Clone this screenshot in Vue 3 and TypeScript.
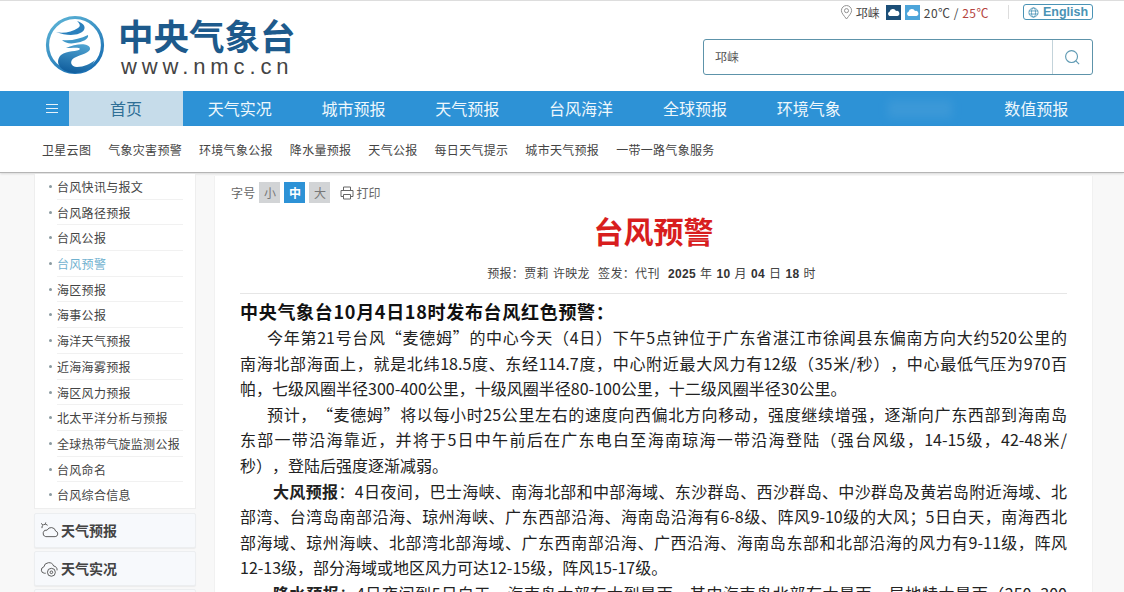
<script setup lang="ts">
const navItems: string[] = ["天气实况", "城市预报", "天气预报", "台风海洋", "全球预报", "环境气象", "", "数值预报"];
const subNav: string[] = ["卫星云图", "气象灾害预警", "环境气象公报", "降水量预报", "天气公报", "每日天气提示", "城市天气预报", "一带一路气象服务"];
const sideList: string[] = [
  "台风快讯与报文", "台风路径预报", "台风公报", "台风预警", "海区预报", "海事公报", "海洋天气预报",
  "近海海雾预报", "海区风力预报", "北太平洋分析与预报", "全球热带气旋监测公报", "台风命名", "台风综合信息",
];
const active = "台风预警";

interface Para {
  label?: string;
  lines: string[];
  open?: boolean; // last line runs past the fold, justify it too
}
const paras: Para[] = [
  {
    lines: [
      "今年第21号台风“麦德姆”的中心今天（4日）下午5点钟位于广东省湛江市徐闻县东偏南方向大约520公里的",
      "南海北部海面上，就是北纬18.5度、东经114.7度，中心附近最大风力有12级（35米/秒），中心最低气压为970百",
      "帕，七级风圈半径300-400公里，十级风圈半径80-100公里，十二级风圈半径30公里。",
    ],
  },
  {
    lines: [
      "预计，“麦德姆”将以每小时25公里左右的速度向西偏北方向移动，强度继续增强，逐渐向广东西部到海南岛",
      "东部一带沿海靠近，并将于5日中午前后在广东电白至海南琼海一带沿海登陆（强台风级，14-15级，42-48米/",
      "秒），登陆后强度逐渐减弱。",
    ],
  },
  {
    label: "大风预报",
    lines: [
      "：4日夜间，巴士海峡、南海北部和中部海域、东沙群岛、西沙群岛、中沙群岛及黄岩岛附近海域、北",
      "部湾、台湾岛南部沿海、琼州海峡、广东西部沿海、海南岛沿海有6-8级、阵风9-10级的大风；5日白天，南海西北",
      "部海域、琼州海峡、北部湾北部海域、广东西南部沿海、广西沿海、海南岛东部和北部沿海的风力有9-11级，阵风",
      "12-13级，部分海域或地区风力可达12-15级，阵风15-17级。",
    ],
  },
  {
    label: "降水预报",
    open: true,
    lines: ["：4日夜间到5日白天，海南岛大部有大到暴雨，其中海南岛北部有大暴雨，局地特大暴雨（250~300"],
  },
];

function lineClass(p: Para, i: number): Record<string, boolean> {
  return {
    first: i === 0,
    deep: i === 0 && !!p.label,
    end: i === p.lines.length - 1 && !p.open,
  };
}
</script>

<template>
  <div class="page">
    <header class="header">
      <div class="logo">
        <svg class="logo-mark" viewBox="0 0 60 60" width="60" height="60">
          <defs>
            <linearGradient id="ring" x1="0.1" y1="0" x2="0.7" y2="1">
              <stop offset="0" stop-color="#5db4d6" />
              <stop offset="1" stop-color="#1a6fb3" />
            </linearGradient>
            <linearGradient id="swirl" x1="0.6" y1="0" x2="0.3" y2="1">
              <stop offset="0" stop-color="#4fa3d1" />
              <stop offset="1" stop-color="#0f5c9c" />
            </linearGradient>
          </defs>
          <circle cx="30" cy="30" r="27.5" fill="none" stroke="url(#ring)" stroke-width="3.2" />
          <path d="M11 17 C18 19 27 17 33 13 C36 11 35 9 32 6 C38 8 41 11 39 15 C36 20 24 22 11 17 Z" fill="#2a80bd" />
          <path d="M17 25 C26 26 35 24 43 20 C44 24 38 27 30 28 C25 29 20 28 17 25 Z" fill="#3e97c8" />
          <path d="M21 33 C30 29 43 27 45 33 C46 38 36 39 29 43 C24 46 26 52 32 52 C39 52 45 49 50 45 C46 54 38 58 29 58 C15 57 9 47 16 40 C22 35 33 37 35 34 C35 32 27 33 21 33 Z" fill="url(#swirl)" />
        </svg>
        <div class="logo-text">
          <div class="logo-cn">中央气象台</div>
          <div class="logo-url">www.nmc.cn</div>
        </div>
      </div>

      <div class="header-right">
        <div class="top-info">
          <svg class="pin" viewBox="0 0 14 16" width="13" height="15" fill="none" stroke="#8a8a8a" stroke-width="1">
            <path d="M7 15 C4 11 1.5 8.5 1.5 6 A5.5 5.5 0 0 1 12.5 6 C12.5 8.5 10 11 7 15 Z" />
            <circle cx="7" cy="6" r="2.2" />
          </svg>
          <span class="city">邛崃</span>
          <svg class="wx" viewBox="0 0 15 15" width="15" height="15">
            <rect width="15" height="15" fill="#1c4f78" />
            <path d="M3.5 11 A2.2 2.2 0 0 1 3.6 6.8 A3.4 3.4 0 0 1 10 6 A2.5 2.5 0 0 1 11.5 11 Z" fill="#fff" />
          </svg>
          <svg class="wx" viewBox="0 0 15 15" width="15" height="15">
            <rect width="15" height="15" fill="#4da5da" />
            <path d="M3.5 11 A2.2 2.2 0 0 1 3.6 6.8 A3.4 3.4 0 0 1 10 6 A2.5 2.5 0 0 1 11.5 11 Z" fill="#fff" />
          </svg>
          <span class="temp">20℃ / <em>25℃</em></span>
          <i class="sep"></i>
          <a class="english">
            <svg viewBox="0 0 12 12" width="11" height="11" fill="none" stroke="#4a93b5" stroke-width="0.9">
              <circle cx="6" cy="6" r="5" />
              <ellipse cx="6" cy="6" rx="2.2" ry="5" />
              <path d="M1 4.3 H11 M1 7.7 H11" />
            </svg>
            English
          </a>
        </div>
        <div class="search">
          <div class="search-input">邛崃</div>
          <div class="search-btn">
            <svg viewBox="0 0 18 18" width="17" height="17" fill="none" stroke="#5f9ab3" stroke-width="1.2">
              <circle cx="8" cy="8" r="6.3" />
              <path d="M12.6 12.6 L16 16" />
            </svg>
          </div>
        </div>
      </div>
    </header>

    <nav class="nav">
      <div class="burger"><span></span><span></span><span></span></div>
      <a class="nav-item on">首页</a>
      <a v-for="(item, i) in navItems" :key="i" class="nav-item">
        {{ item }}<i v-if="!item" class="blur-patch"></i>
      </a>
    </nav>

    <div class="subnav">
      <a v-for="item in subNav" :key="item">{{ item }}</a>
    </div>

    <div class="main">
      <aside class="side">
        <ul class="side-list">
          <li v-for="item in sideList" :key="item" :class="{ cur: item === active }">
            <span>{{ item }}</span>
          </li>
        </ul>
        <div class="side-card">
          <svg viewBox="0 0 20 18" width="19" height="17" fill="none" stroke="#555" stroke-width="1">
            <path d="M6 15.5 H16 A3 3 0 0 0 16.5 9.6 A4.8 4.8 0 0 0 7.5 8.6 A3.5 3.5 0 0 0 6 15.5 Z" />
            <path d="M2 6.5 A3.5 3.5 0 0 1 8 3.5 M1 1.5 L3 3 M6 0.5 L5.6 2" />
          </svg>
          天气预报
        </div>
        <div class="side-card">
          <svg viewBox="0 0 20 18" width="19" height="17" fill="none" stroke="#555" stroke-width="1">
            <path d="M6 14 H4.5 A3.4 3.4 0 0 1 4 7.3 A5.4 5.4 0 0 1 14.4 6.4 A3.9 3.9 0 0 1 18 11" />
            <circle cx="12" cy="13" r="4.2" />
            <circle cx="12" cy="13" r="1.4" />
          </svg>
          天气实况
        </div>
        <div class="side-card"></div>
      </aside>

      <article class="article">
        <div class="tools">
          <span class="tools-label">字号</span>
          <b class="size">小</b>
          <b class="size now">中</b>
          <b class="size">大</b>
          <svg class="printer" viewBox="0 0 14 14" width="14" height="14" fill="none" stroke="#666" stroke-width="1">
            <path d="M3.5 4.5 V1 H10.5 V4.5 M3.5 10.5 H1 V4.5 H13 V10.5 H10.5 M3.5 8.5 H10.5 V13 H3.5 Z" />
          </svg>
          <span class="tools-label">打印</span>
        </div>

        <h1 class="title">台风预警</h1>
        <div class="meta">
          预报：贾莉 许映龙&nbsp;&nbsp;签发：代刊&nbsp;&nbsp;<b>2025</b> 年 <b>10</b> 月 <b>04</b> 日 <b>18</b> 时
        </div>

        <div class="body">
          <h2 class="lead">中央气象台10月4日18时发布台风红色预警：</h2>
          <p v-for="(p, pi) in paras" :key="pi">
            <span v-for="(line, i) in p.lines" :key="i" class="line" :class="lineClass(p, i)"><b v-if="p.label && i === 0">{{ p.label }}</b>{{ line }}</span>
          </p>
        </div>
      </article>
    </div>
  </div>
</template>

<style scoped>
.page {
  width: 1124px;
  height: 592px;
  overflow: hidden;
  background: #f8f8f8;
  font-family: "Noto Sans CJK SC", "Noto Sans", sans-serif;
  color: #333;
}

/* header */
.header {
  height: 90px;
  border-top: 1px solid #ddd;
  background: #fff;
  display: flex;
  justify-content: space-between;
  padding: 0 31px 0 45px;
}
.logo {
  display: flex;
  align-items: flex-start;
  padding-top: 14px;
}
.logo-text {
  margin-left: 13px;
}
.logo-cn {
  font-size: 35.5px;
  line-height: 40px;
  font-weight: 700;
  color: #1d5a8c;
}
.logo-url {
  font-family: "Liberation Sans", sans-serif;
  font-size: 22px;
  line-height: 22px;
  letter-spacing: 4.9px;
  color: #444;
  margin-left: 3px;
  margin-top: 1px;
}
.header-right {
  display: flex;
  flex-direction: column;
  align-items: flex-end;
}
.top-info {
  display: flex;
  align-items: center;
  height: 16px;
  margin-top: 3px;
  font-size: 12px;
  color: #444;
}
.city {
  margin: 0 6px 0 3px;
}
.wx {
  margin-right: 4px;
}
.temp {
  letter-spacing: 0.5px;
}
.temp em {
  font-style: normal;
  color: #b5443f;
}
.sep {
  width: 1px;
  height: 14px;
  background: #ddd;
  margin: 0 14px 0 19px;
}
.english {
  display: flex;
  align-items: center;
  gap: 4px;
  width: 70px;
  height: 16px;
  box-sizing: border-box;
  padding-left: 4px;
  border: 1px solid #4a93b5;
  border-radius: 3px;
  color: #4a93b5;
  font-family: "Liberation Sans", sans-serif;
  font-weight: 700;
  font-size: 12.5px;
}
.search {
  display: flex;
  width: 390px;
  height: 36px;
  margin-top: 19px;
  box-sizing: border-box;
  border: 1px solid #5d93aa;
  border-radius: 3px;
}
.search-input {
  flex: 1;
  padding-left: 11px;
  line-height: 34px;
  font-size: 12px;
  color: #555;
}
.search-btn {
  width: 39px;
  border-left: 1px solid #c3d3da;
  display: flex;
  align-items: center;
  justify-content: center;
}

/* main nav */
.nav {
  height: 35px;
  background: #2d92d6;
  display: flex;
  padding-left: 34px;
}
.burger {
  width: 35px;
  display: flex;
  flex-direction: column;
  justify-content: center;
  align-items: center;
  gap: 3px;
}
.burger span {
  width: 12px;
  height: 1px;
  background: #e6f2fa;
}
.nav-item {
  position: relative;
  width: 113.8px;
  text-align: center;
  line-height: 35px;
  font-size: 16px;
  color: #eef7fc;
}
.nav-item.on {
  background: #c6dcea;
  color: #2f6f96;
}
.blur-patch {
  position: absolute;
  left: 22px;
  top: 9px;
  width: 64px;
  height: 18px;
  background: #4a9fd9;
  opacity: 0.5;
  filter: blur(4px);
}

/* sub nav */
.subnav {
  height: 47px;
  box-sizing: border-box;
  background: #fff;
  border-bottom: 1px solid #b5b5b5;
  box-shadow: 0 1px 2px rgba(0, 0, 0, 0.12);
  display: flex;
  align-items: center;
  gap: 17px;
  padding-left: 42px;
  font-size: 12px;
  letter-spacing: 0.3px;
  color: #444;
}

/* columns */
.main {
  display: flex;
  gap: 18px;
  padding: 1px 31px 0 34px;
}
.side {
  width: 162px;
  flex: none;
}
.side-list {
  list-style: none;
  margin: 0 0 4px;
  padding: 0 12px 0 22px;
  background: #fff;
  border: 1px solid #eee;
  border-top: 0;
  box-sizing: border-box;
  font-size: 12px;
  letter-spacing: 0.3px;
  color: #444;
}
.side-list li {
  position: relative;
  height: 25.7px;
  line-height: 25px;
  box-sizing: border-box;
  border-bottom: 1px solid #f1f1f1;
}
.side-list li:last-child {
  border-bottom: 0;
}
.side-list li::before {
  content: "";
  position: absolute;
  left: -8px;
  top: 11px;
  width: 3px;
  height: 3px;
  border-radius: 50%;
  background: #8a9aa0;
}
.side-list li.cur {
  color: #6fb1cf;
}
.side-card {
  display: flex;
  align-items: center;
  gap: 2px;
  height: 35px;
  margin-bottom: 3px;
  padding-left: 5px;
  box-sizing: border-box;
  background: #f7f9fc;
  border: 1px solid #eceef0;
  border-radius: 2px;
  box-shadow: 0 1px 1px rgba(0, 0, 0, 0.05);
  font-size: 14px;
  font-weight: 700;
  color: #444;
}

/* article */
.article {
  flex: 1;
  background: #fff;
  margin-top: 2px;
  padding: 0 25px;
  border-left: 1px solid #f1f1f1;
  border-right: 1px solid #f1f1f1;
}
.tools {
  display: flex;
  align-items: center;
  height: 21px;
  margin-top: 6px;
  margin-left: -9px;
  font-size: 12px;
  color: #666;
}
.tools-label {
  letter-spacing: 0.2px;
}
.size {
  width: 21px;
  height: 21px;
  line-height: 21px;
  margin-left: 4px;
  text-align: center;
  font-weight: 400;
  background: #d2d4d6;
  color: #777;
}
.size.now {
  background: #2d92d6;
  color: #fff;
  font-weight: 700;
}
.printer {
  margin: 0 2px 0 10px;
}
.title {
  margin: 6px 0 0;
  text-align: center;
  font-size: 30px;
  line-height: 42px;
  font-weight: 700;
  color: #d81e1e;
}
.meta {
  margin-top: 11px;
  height: 31px;
  padding-right: 4px;
  line-height: 22px;
  text-align: center;
  font-size: 12px;
  letter-spacing: 0.35px;
  word-spacing: 1px;
  color: #444;
  border-bottom: 1px solid #e6e6e6;
  text-spacing-trim: space-all;
}
.meta b {
  font-family: "Liberation Sans", sans-serif;
  color: #333;
}
.body {
  color: #222;
  font-size: 16px;
  line-height: 25.6px;
  text-spacing-trim: space-all;
}
.lead {
  margin: 3px 0 0;
  font-size: 18px;
  line-height: 28px;
  letter-spacing: 0.7px;
  font-weight: 700;
  color: #111;
}
.body p {
  margin: 0;
}
.line {
  display: block;
  text-align: justify;
  text-align-last: justify;
}
.line.end {
  text-align-last: left;
}
.line.first {
  text-indent: 27px;
}
.line.deep {
  text-indent: 33px;
}
.line b {
  font-weight: 700;
}
</style>

<style>
html,
body {
  margin: 0;
  overflow: hidden;
}
</style>
